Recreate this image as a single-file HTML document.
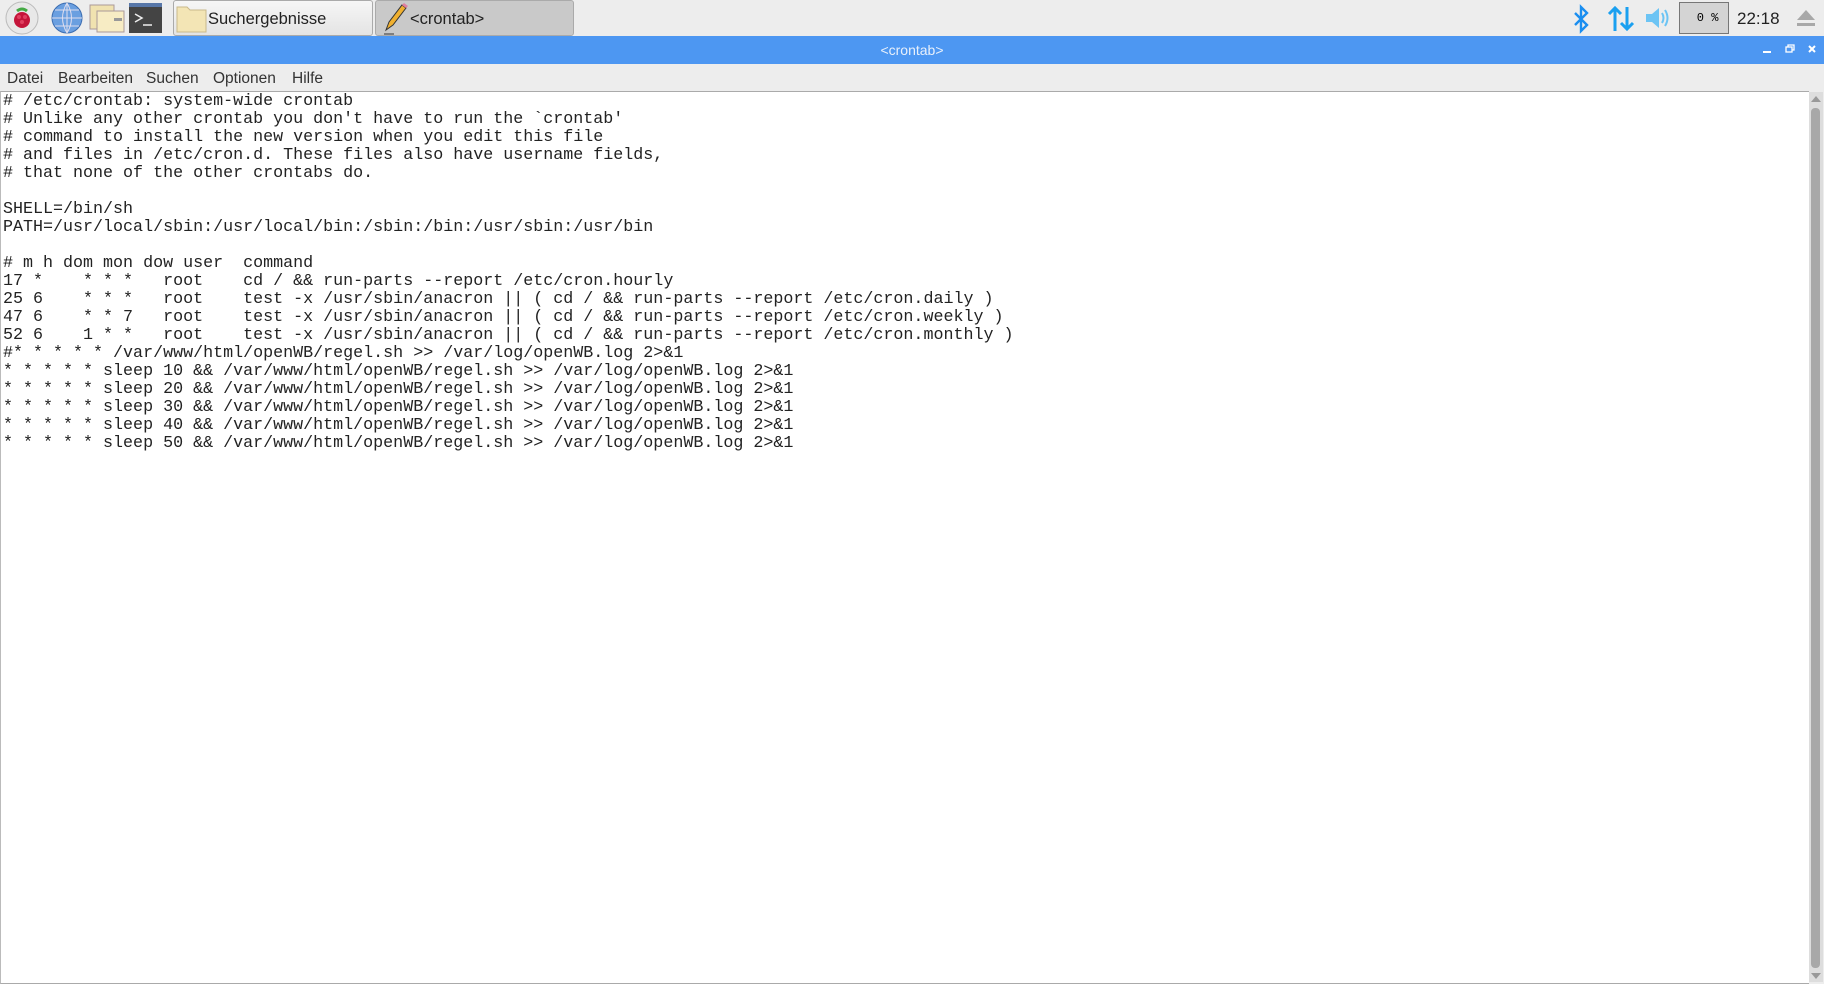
<!DOCTYPE html><html><head><meta charset="utf-8"><style>
body{margin:0;width:1824px;height:984px;overflow:hidden;background:#ededed;font-family:"Liberation Sans",sans-serif;position:relative}
.tb{position:absolute;left:0;top:0;width:1824px;height:36px;background:#ededed}
.btn{position:absolute;top:0;height:34px;border:1px solid #aaa;border-radius:3px;background:linear-gradient(#f6f6f6,#e4e4e4);font-size:16.5px;line-height:36px}
.title{position:absolute;left:0;top:36px;width:1824px;height:28px;background:#4d97f2;color:#e8f0fb;font-size:14px;text-align:center;line-height:28px}
.menu{position:absolute;top:66px;left:0;width:1824px;height:25px;font-size:15.5px;color:#333;line-height:26px}
.menu span{position:absolute}
.ed{position:absolute;left:0;top:91px;width:1808px;height:891px;background:#fff;border-top:1px solid #aaa;border-left:1px solid #bbb;border-bottom:1px solid #aaa}
pre{margin:0;position:absolute;left:2px;top:1px;font-family:"Liberation Mono",monospace;font-size:16.68px;line-height:18px;color:#222}
.sb{position:absolute;left:1809px;top:92px;width:14px;height:890px;background:#ddd}
.th{position:absolute;left:1811px;top:108px;width:9px;height:860px;background:#a8a8a8;border-radius:4px}
</style></head><body>
<div class="tb">
<svg style="position:absolute;left:5px;top:1px" width="34" height="34"><circle cx="17" cy="17" r="16" fill="#e8e8e8" stroke="#bbb"/><path d="M12 10q5-4 10 0" stroke="#4a4" stroke-width="3" fill="none"/><circle cx="17" cy="19" r="8" fill="#c4153a"/><circle cx="14" cy="16" r="2" fill="#e04060"/><circle cx="20" cy="16" r="2" fill="#e04060"/><circle cx="17" cy="21" r="2" fill="#e04060"/></svg>
<svg style="position:absolute;left:50px;top:1px" width="34" height="34"><circle cx="17" cy="17" r="15" fill="#6a9fe0" stroke="#3b6cb0"/><path d="M2 17h30M17 2v30M5 9h24M5 25h24M17 2q-9 15 0 30M17 2q9 15 0 30" stroke="#dde" fill="none"/></svg>
<svg style="position:absolute;left:88px;top:2px" width="38" height="32"><rect x="2" y="3" width="24" height="24" fill="#f0e2b0" stroke="#a99"/><rect x="9" y="9" width="27" height="21" fill="#f7ecc4" stroke="#a99"/><rect x="26" y="16" width="8" height="3" fill="#999"/></svg>
<svg style="position:absolute;left:128px;top:2px" width="35" height="32"><rect x="1" y="1" width="33" height="30" fill="#444"/><rect x="1" y="1" width="33" height="4" fill="#5877a8"/><path d="M7 12l7 4-7 4M15 23h9" stroke="#eee" stroke-width="1.5" fill="none"/></svg>
<div class="btn" style="left:173px;width:198px"><svg style="position:absolute;left:2px;top:4px" width="32" height="28"><path d="M1 2h10l3 3h16v22H1z" fill="#f3e5b5" stroke="#c9b98a"/></svg><span style="position:absolute;left:34px;color:#222">Suchergebnisse</span></div>
<div class="btn" style="left:375px;width:197px;background:#c9c9c9"><svg style="position:absolute;left:6px;top:2px" width="26" height="32"><path d="M4 27l3-8 13-17 4 3-13 17z" fill="#f0b030" stroke="#333"/><path d="M20 2l4 3 2-2-4-3z" fill="#e080a0"/><path d="M2 31h10" stroke="#333"/></svg><span style="position:absolute;left:34px;color:#222">&lt;crontab&gt;</span></div>
<svg style="position:absolute;left:1572px;top:4px" width="20" height="30"><path d="M3 9l12 12-6 6V3l6 6L3 21" stroke="#1a8ef0" stroke-width="2.4" fill="none"/></svg>
<svg style="position:absolute;left:1607px;top:5px" width="28" height="26"><path d="M8 26V3M2 9l6-6 6 6M20 2v22M14 18l6 6 6-6" stroke="#1aa0f0" stroke-width="3" fill="none"/></svg>
<svg style="position:absolute;left:1645px;top:6px" width="28" height="24"><path d="M1 8h6l7-6v20l-7-6H1z" fill="#6cc4f4"/><path d="M17 7q3 5 0 10M20 4q5 8 0 16" stroke="#6cc4f4" stroke-width="2" fill="none"/></svg>
<div style="position:absolute;left:1679px;top:2px;width:48px;height:30px;background:#d4d4d4;border:1px solid #777;font-family:'Liberation Mono',monospace;font-size:12px;line-height:30px;text-align:center">&nbsp;0 %</div>
<div style="position:absolute;left:1737px;top:9px;font-size:17px;color:#222">22:18</div>
<svg style="position:absolute;left:1796px;top:9px" width="20" height="18"><path d="M10 1l9 10H1z" fill="#a8a8a8"/><rect x="1" y="14" width="18" height="3" fill="#a8a8a8"/></svg>
</div>
<div class="title">&lt;crontab&gt;<svg style="position:absolute;right:0;top:0" width="70" height="28"><path d="M9 16h8" stroke="#fff" stroke-width="2"/><rect x="32" y="11" width="6" height="5" stroke="#fff" fill="none" stroke-width="1.3"/><path d="M34 11V9h6v5h-2" stroke="#fff" fill="none" stroke-width="1.3"/><path d="M55 10l6 6M61 10l-6 6" stroke="#fff" stroke-width="2"/></svg></div>
<div class="menu"><span style="left:7px">Datei</span><span style="left:58px">Bearbeiten</span><span style="left:146px">Suchen</span><span style="left:213px">Optionen</span><span style="left:292px">Hilfe</span></div>
<div class="ed"><pre># /etc/crontab: system-wide crontab
# Unlike any other crontab you don't have to run the `crontab'
# command to install the new version when you edit this file
# and files in /etc/cron.d. These files also have username fields,
# that none of the other crontabs do.

SHELL=/bin/sh
PATH=/usr/local/sbin:/usr/local/bin:/sbin:/bin:/usr/sbin:/usr/bin

# m h dom mon dow user  command
17 *    * * *   root    cd / &amp;&amp; run-parts --report /etc/cron.hourly
25 6    * * *   root    test -x /usr/sbin/anacron || ( cd / &amp;&amp; run-parts --report /etc/cron.daily )
47 6    * * 7   root    test -x /usr/sbin/anacron || ( cd / &amp;&amp; run-parts --report /etc/cron.weekly )
52 6    1 * *   root    test -x /usr/sbin/anacron || ( cd / &amp;&amp; run-parts --report /etc/cron.monthly )
#* * * * * /var/www/html/openWB/regel.sh &gt;&gt; /var/log/openWB.log 2&gt;&amp;1
* * * * * sleep 10 &amp;&amp; /var/www/html/openWB/regel.sh &gt;&gt; /var/log/openWB.log 2&gt;&amp;1
* * * * * sleep 20 &amp;&amp; /var/www/html/openWB/regel.sh &gt;&gt; /var/log/openWB.log 2&gt;&amp;1
* * * * * sleep 30 &amp;&amp; /var/www/html/openWB/regel.sh &gt;&gt; /var/log/openWB.log 2&gt;&amp;1
* * * * * sleep 40 &amp;&amp; /var/www/html/openWB/regel.sh &gt;&gt; /var/log/openWB.log 2&gt;&amp;1
* * * * * sleep 50 &amp;&amp; /var/www/html/openWB/regel.sh &gt;&gt; /var/log/openWB.log 2&gt;&amp;1</pre></div>
<div class="sb"></div><div class="th"></div>
<svg style="position:absolute;left:1810px;top:95px" width="12" height="8"><path d="M1 7l5-6 5 6z" fill="#999"/></svg>
<svg style="position:absolute;left:1810px;top:972px" width="12" height="8"><path d="M1 1l5 6 5-6z" fill="#999"/></svg>
</body></html>
